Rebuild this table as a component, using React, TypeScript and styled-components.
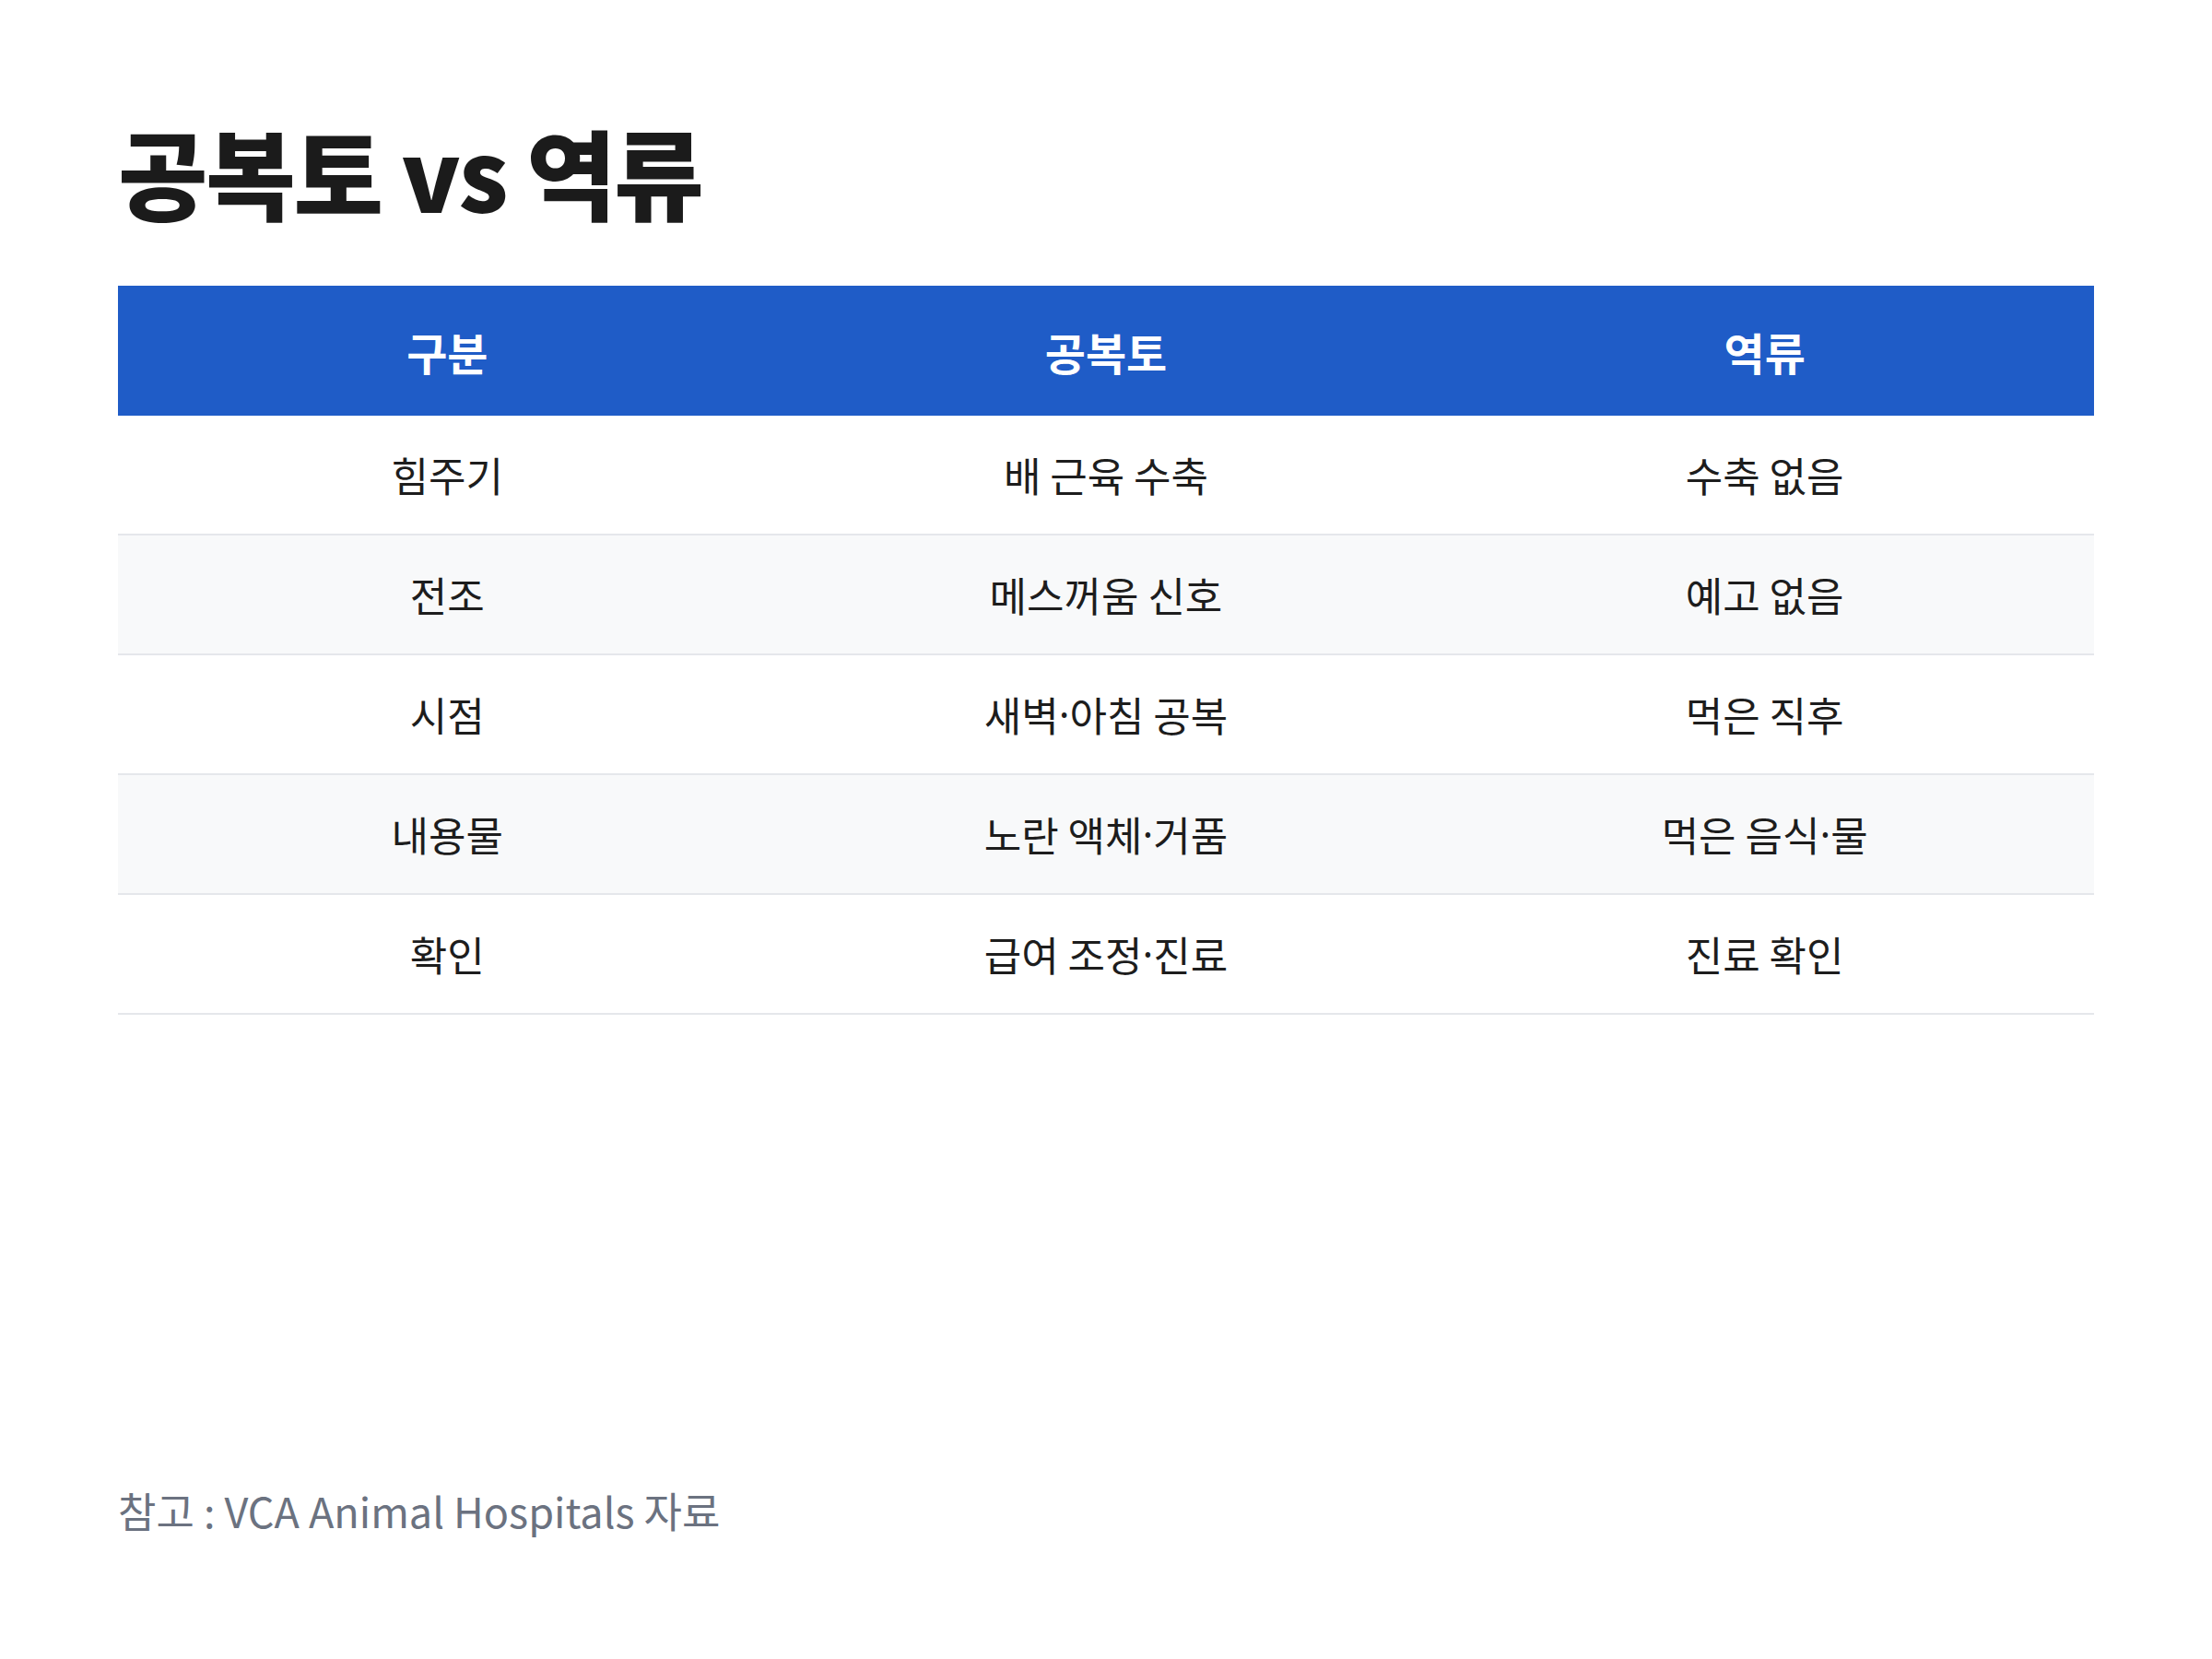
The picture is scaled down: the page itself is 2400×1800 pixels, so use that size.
import React from "react";
import styled, { createGlobalStyle } from "styled-components";

const GlobalStyle = createGlobalStyle`
  html, body {
    margin: 0;
    padding: 0;
    background: #ffffff;
  }
  body {
    font-family: "Noto Sans CJK KR", "Noto Sans", sans-serif;
  }
`;

const Page = styled.div`
  box-sizing: border-box;
  width: 2400px;
  height: 1800px;
  padding: 122px 128px 100px;
  display: flex;
  flex-direction: column;
`;

const Title = styled.h1`
  margin: 0 0 61px;
  font-family: "Noto Sans CJK KR", sans-serif;
  font-weight: 900;
  font-size: 106px;
  line-height: 1.2;
  letter-spacing: -0.022em;
  color: #1b1b1b;
`;

const Table = styled.div`
  display: grid;
  grid-template-columns: repeat(3, 1fr);
`;

const HeadCell = styled.div`
  height: 141px;
  display: flex;
  align-items: center;
  justify-content: center;
  background: #1f5cc7;
  color: #ffffff;
  font-size: 48px;
  font-weight: 700;
`;

const Cell = styled.div<{ $alt: boolean }>`
  height: 128px;
  display: flex;
  align-items: center;
  justify-content: center;
  background: ${(p) => (p.$alt ? "#f8f9fa" : "#ffffff")};
  border-bottom: 2px solid #e5e7eb;
  color: #1d1d1d;
  font-size: 44px;
  font-weight: 400;
  white-space: pre;
`;

const Dot = styled.span`
  font-family: "Noto Sans", "DejaVu Sans", sans-serif;
`;

const Footer = styled.p`
  margin: auto 0 0;
  font-size: 45px;
  line-height: 1.2;
  color: #6b7280;
  padding-bottom: 34px;
`;

const headers = ["구분", "공복토", "역류"];
const rows = [
  ["힘주기", "배 근육 수축", "수축 없음"],
  ["전조", "메스꺼움 신호", "예고 없음"],
  ["시점", "새벽·아침 공복", "먹은 직후"],
  ["내용물", "노란 액체·거품", "먹은 음식·물"],
  ["확인", "급여 조정·진료", "진료 확인"],
];

function renderText(text: string) {
  const parts = text.split("·");
  return parts.map((p, i) => (
    <React.Fragment key={i}>
      {i > 0 && <Dot>·</Dot>}
      {p}
    </React.Fragment>
  ));
}

export default function App() {
  return (
    <>
      <GlobalStyle />
      <Page>
        <Title>공복토 vs 역류</Title>
        <Table>
          {headers.map((h) => (
            <HeadCell key={h}>{h}</HeadCell>
          ))}
          {rows.map((r, i) =>
            r.map((c, j) => (
              <Cell key={`${i}-${j}`} $alt={i % 2 === 1}>
                {renderText(c)}
              </Cell>
            ))
          )}
        </Table>
        <Footer>참고 : VCA Animal Hospitals 자료</Footer>
      </Page>
    </>
  );
}
